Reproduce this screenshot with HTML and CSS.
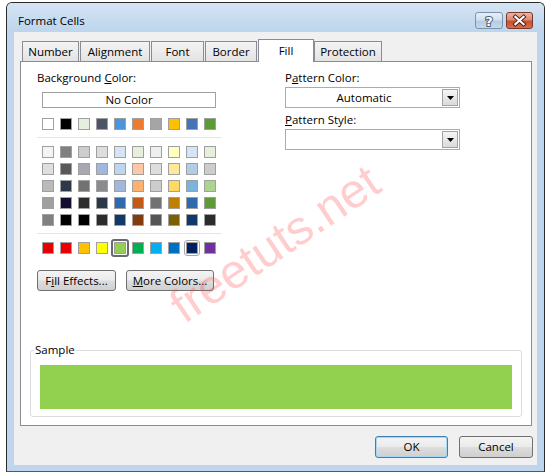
FILE: index.html
```html
<!DOCTYPE html>
<html>
<head>
<meta charset="utf-8">
<title>Format Cells</title>
<link rel="stylesheet" href="styles.css">
</head>
<body>
<div class="window">
  <div class="titlebar">
    <span class="title">Format Cells</span>
    <div class="caption-btns">
      <div class="cbtn help">
        <svg width="26" height="15" viewBox="0 0 26 15"><text x="13" y="12.5" text-anchor="middle" class="qmark">?</text></svg>
      </div>
      <div class="cbtn close">
        <svg width="27" height="15" viewBox="0 0 27 15">
          <path d="M9 3.5 L18 11.5 M18 3.5 L9 11.5" stroke="#4a1d12" stroke-width="4.2" stroke-linecap="square" fill="none"/>
          <path d="M9 3.5 L18 11.5 M18 3.5 L9 11.5" stroke="#ffffff" stroke-width="2.2" stroke-linecap="square" fill="none"/>
        </svg>
      </div>
    </div>
  </div>

  <div class="client">
    <div class="tabs">
      <div class="tab t-number">Number</div>
      <div class="tab t-align">Alignment</div>
      <div class="tab t-font">Font</div>
      <div class="tab t-border">Border</div>
      <div class="tab active t-fill">Fill</div>
      <div class="tab t-prot">Protection</div>
    </div>

    <div class="panel">
      <div class="cols">
        <div class="left">
          <div class="label">Background <u>C</u>olor:</div>
          <div class="nocolor">No Color</div>

          <div class="swrow theme">
            <span class="sw" style="background:#ffffff"></span>
            <span class="sw" style="background:#000000"></span>
            <span class="sw" style="background:#e6eedd"></span>
            <span class="sw" style="background:#4c5465"></span>
            <span class="sw" style="background:#4b96db"></span>
            <span class="sw" style="background:#ee7c30"></span>
            <span class="sw" style="background:#a5a5a5"></span>
            <span class="sw" style="background:#ffc000"></span>
            <span class="sw" style="background:#4673b8"></span>
            <span class="sw" style="background:#5c9a35"></span>
          </div>

          <div class="sep"></div>

          <div class="grid">
            <span class="sw" style="background:#f4f4f4"></span>
            <span class="sw" style="background:#808080"></span>
            <span class="sw" style="background:#cdcdcd"></span>
            <span class="sw" style="background:#dddddd"></span>
            <span class="sw" style="background:#d6e5f5"></span>
            <span class="sw" style="background:#e6eedc"></span>
            <span class="sw" style="background:#eeeeee"></span>
            <span class="sw" style="background:#ffffc0"></span>
            <span class="sw" style="background:#d6e5f5"></span>
            <span class="sw" style="background:#e6eedc"></span>

            <span class="sw" style="background:#dedede"></span>
            <span class="sw" style="background:#595959"></span>
            <span class="sw" style="background:#a8a8b0"></span>
            <span class="sw" style="background:#a0b8db"></span>
            <span class="sw" style="background:#bcd6ee"></span>
            <span class="sw" style="background:#fec8a8"></span>
            <span class="sw" style="background:#dddddd"></span>
            <span class="sw" style="background:#ffe89a"></span>
            <span class="sw" style="background:#b3cde5"></span>
            <span class="sw" style="background:#cdcdcd"></span>

            <span class="sw" style="background:#bababa"></span>
            <span class="sw" style="background:#2c3848"></span>
            <span class="sw" style="background:#727272"></span>
            <span class="sw" style="background:#8b8b8f"></span>
            <span class="sw" style="background:#a0b8db"></span>
            <span class="sw" style="background:#feb06f"></span>
            <span class="sw" style="background:#cdcdcd"></span>
            <span class="sw" style="background:#ffda60"></span>
            <span class="sw" style="background:#78b4dc"></span>
            <span class="sw" style="background:#acd48d"></span>

            <span class="sw" style="background:#a0a0a0"></span>
            <span class="sw" style="background:#150e32"></span>
            <span class="sw" style="background:#2c2c2c"></span>
            <span class="sw" style="background:#2c3848"></span>
            <span class="sw" style="background:#2e6aaf"></span>
            <span class="sw" style="background:#c55a14"></span>
            <span class="sw" style="background:#727272"></span>
            <span class="sw" style="background:#bf8000"></span>
            <span class="sw" style="background:#2e6aaf"></span>
            <span class="sw" style="background:#5e9a35"></span>

            <span class="sw" style="background:#808080"></span>
            <span class="sw" style="background:#000000"></span>
            <span class="sw" style="background:#000000"></span>
            <span class="sw" style="background:#2c2c2c"></span>
            <span class="sw" style="background:#10386b"></span>
            <span class="sw" style="background:#853c0c"></span>
            <span class="sw" style="background:#555555"></span>
            <span class="sw" style="background:#7f6000"></span>
            <span class="sw" style="background:#10386b"></span>
            <span class="sw" style="background:#2c2c2c"></span>
          </div>

          <div class="sep"></div>

          <div class="swrow std">
            <span class="sw" style="background:#e60000"></span>
            <span class="sw" style="background:#ea0000"></span>
            <span class="sw" style="background:#ffc000"></span>
            <span class="sw" style="background:#ffff00"></span>
            <span class="sw selected" style="background:#92d050"></span>
            <span class="sw" style="background:#00b050"></span>
            <span class="sw" style="background:#00b0f0"></span>
            <span class="sw" style="background:#0070c0"></span>
            <span class="sw hover" style="background:#002060"></span>
            <span class="sw" style="background:#7030a0"></span>
          </div>

          <div class="btnrow">
            <button class="btn fill-fx">F<u>i</u>ll Effects...</button>
            <button class="btn more"><u>M</u>ore Colors...</button>
          </div>
        </div>

        <div class="right">
          <div class="label">P<u>a</u>ttern Color:</div>
          <div class="combo">
            <span class="combo-text">Automatic</span>
            <span class="drop"><svg width="7" height="4" viewBox="0 0 7 4"><polygon points="0,0 7,0 3.5,4" fill="#000"/></svg></span>
          </div>
          <div class="label label2"><u>P</u>attern Style:</div>
          <div class="combo">
            <span class="combo-text"></span>
            <span class="drop"><svg width="7" height="4" viewBox="0 0 7 4"><polygon points="0,0 7,0 3.5,4" fill="#000"/></svg></span>
          </div>
        </div>
      </div>

      <fieldset class="sample">
        <legend>Sample</legend>
        <div class="sample-fill"></div>
      </fieldset>
    </div>

    <div class="footer">
      <button class="btn ok">OK</button>
      <button class="btn cancel">Cancel</button>
    </div>
  </div>
</div>
<div class="watermark">freetuts.net</div>
</body>
</html>
```

FILE: styles.css
```css
html, body {
  margin: 0;
  padding: 0;
  background: #ffffff;
}

body {
  font-family: "Open Sans", "Noto Sans", sans-serif;
  font-size: 11.5px;
  color: #000;
  width: 552px;
  height: 474px;
  overflow: hidden;
  position: relative;
}

.window {
  margin: 2px 0 0 6px;
  width: 539px;
  height: 470px;
  box-sizing: border-box;
  border: 1px solid #2b2b2b;
  border-bottom-color: #1b6f83;
  border-radius: 6px 6px 0 0;
  background: #bdd6ee;
  display: flex;
  flex-direction: column;
}

.titlebar {
  height: 29px;
  flex: none;
  display: flex;
  justify-content: space-between;
  align-items: flex-start;
  padding: 0 11px;
  background: linear-gradient(#d5e4f3, #bcd5ed);
  border-radius: 5px 5px 0 0;
}

.title {
  margin-top: 10px;
  line-height: 15px;
  font-size: 11.5px;
}

.caption-btns {
  display: flex;
  gap: 3px;
  margin-top: 9px;
}

.cbtn {
  height: 17px;
  box-sizing: border-box;
  border-radius: 3px;
  display: flex;
  align-items: center;
  justify-content: center;
}

.cbtn svg { display: block; }

.help {
  width: 28px;
  border: 1px solid #7b93ad;
  background: linear-gradient(#e6eef7 0%, #d2e0ef 45%, #b7cce3 55%, #c5d8ec 100%);
}

.qmark {
  font-family: "DejaVu Sans", sans-serif;
  font-size: 13px;
  font-weight: bold;
  fill: #ffffff;
  stroke: #4d5c6d;
  stroke-width: 2px;
  paint-order: stroke;
}

.close {
  width: 27px;
  border: 1px solid #7a3a2a;
  background: linear-gradient(#eeb3a4 0%, #de8a72 45%, #c9502f 55%, #d96d4c 100%);
}

.client {
  flex: 1;
  margin: 0 7px 6px;
  background: #f0f0f0;
  display: flex;
  flex-direction: column;
  padding-top: 7px;
}

/* Tabs */
.tabs {
  display: flex;
  align-items: flex-end;
  margin-left: 8px;
  margin-bottom: -1px;
  position: relative;
  z-index: 2;
}

.tab {
  box-sizing: border-box;
  height: 20px;
  margin-bottom: 1px;
  margin-right: 1px;
  border: 1px solid #898c95;
  border-bottom: none;
  background: linear-gradient(#f4f4f4, #e3e3e3);
  text-align: center;
  line-height: 19px;
}

.t-number { width: 57px; }
.t-align { width: 70px; }
.t-font { width: 53px; }
.t-border { width: 52px; }
.t-fill { width: 56px; }
.t-prot { width: 68px; }

.tab.active {
  height: 23px;
  margin-bottom: 0;
  margin-right: 0;
  background: #ffffff;
  line-height: 22px;
}

/* Panel */
.panel {
  position: relative;
  z-index: 1;
  box-sizing: border-box;
  height: 365px;
  margin: 0 5px 0 6px;
  border: 1px solid #898c95;
  background: #ffffff;
  display: flex;
  flex-direction: column;
}

.cols {
  display: flex;
  padding-top: 8px;
}

.left {
  margin-left: 16px;
  width: 185px;
}

.right {
  margin-left: 63px;
  width: 175px;
}

.label {
  line-height: 15px;
}

.nocolor {
  margin: 7px 0 0 5px;
  width: 174px;
  height: 16px;
  box-sizing: border-box;
  border: 1px solid #a0a0a0;
  text-align: center;
  line-height: 14px;
}

.swrow {
  display: flex;
  gap: 6px;
  margin-left: 5px;
}

.sw {
  display: block;
  width: 12px;
  height: 12px;
  box-sizing: border-box;
  border: 1px solid #a0a0a0;
  position: relative;
}

.sw.selected::after,
.sw.hover::after {
  content: "";
  position: absolute;
  inset: -4px;
  border-radius: 3px;
  box-sizing: border-box;
}

.sw.selected::after {
  border: 2px solid #6b6b6b;
}

.sw.hover::after {
  border: 1px solid #a6a6a6;
  inset: -3px;
}

.theme { margin-top: 10px; }

.sep {
  height: 1px;
  background: #e2ebd8;
  margin-top: 7px;
}

.grid {
  margin: 8px 0 0 5px;
  display: grid;
  grid-template-columns: repeat(10, 12px);
  column-gap: 6px;
  row-gap: 5px;
}

.std { margin-top: 8px; }

.btnrow {
  margin-top: 16px;
  display: flex;
  gap: 10px;
}

.btn {
  font-family: inherit;
  font-size: 11.5px;
  color: #000;
  height: 21px;
  padding: 0;
  box-sizing: border-box;
  border: 1px solid #707070;
  border-radius: 3px;
  background: linear-gradient(#f3f3f3 0%, #ebebeb 48%, #dddddd 52%, #cfcfcf 100%);
  line-height: 18px;
}

.fill-fx { width: 79px; }
.more { width: 88px; }

/* Combos */
.combo {
  margin-top: 2px;
  height: 21px;
  width: 175px;
  box-sizing: border-box;
  border: 1px solid #a9abb0;
  display: flex;
  align-items: center;
  background: #fff;
}

.combo-text {
  flex: 1;
  text-align: center;
  line-height: 15px;
}

.drop {
  width: 16px;
  height: 17px;
  margin-right: 1px;
  box-sizing: border-box;
  border: 1px solid #a3a3a3;
  background: linear-gradient(#f5f5f5, #dadada);
  display: flex;
  align-items: center;
  justify-content: center;
}

.drop svg { display: block; }

.label2 { margin-top: 4px; }

/* Sample */
.sample {
  margin: auto 9px 8px 9px;
  padding: 0;
  border: 1px solid #dcdcdc;
  border-radius: 3px;
  min-width: 0;
}

.sample legend {
  margin-left: 3px;
  padding: 0 1px;
  line-height: 14px;
}

.sample-fill {
  height: 44px;
  margin: 8px 9px 7px 9px;
  background: #92d050;
}

/* Footer */
.footer {
  display: flex;
  justify-content: flex-end;
  gap: 11px;
  margin: 10px 4px 0 0;
}

.ok {
  width: 73px;
  height: 22px;
  border-color: #3c7fb1;
  box-shadow: inset 0 0 0 1px #a6d8f6;
}

.cancel {
  width: 74px;
  height: 22px;
}

/* Watermark overlay */
.watermark {
  position: absolute;
  z-index: 10;
  left: 140px;
  top: 219px;
  width: 270px;
  height: 50px;
  line-height: 50px;
  text-align: center;
  font-family: "Liberation Sans", sans-serif;
  font-size: 48px;
  color: rgba(255, 70, 70, 0.27);
  transform: rotate(-34deg);
  pointer-events: none;
  white-space: nowrap;
}
```
